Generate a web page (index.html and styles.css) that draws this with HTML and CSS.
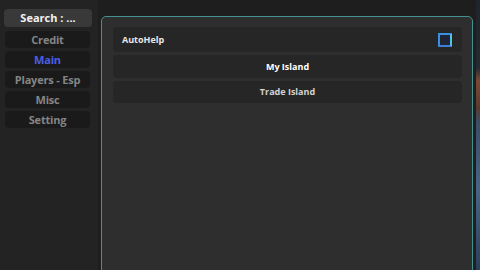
FILE: index.html
```html
<!DOCTYPE html>
<html lang="en">
<head>
    <meta charset="UTF-8" />
    <title>Hub</title>
    <link rel="stylesheet" href="styles.css">
</head>
<body>
    <div class="screen">
        <!-- Seitenleiste -->
        <div class="sidebar">
            <div class="search">Search : ...</div>
            <div class="tab">Credit</div>
            <div class="tab active">Main</div>
            <div class="tab">Players - Esp</div>
            <div class="tab">Misc</div>
            <div class="tab">Setting</div>
        </div>

        <div class="content">
            <div class="panel">
                <div class="row toggle">
                    <span>AutoHelp</span>
                    <span class="check"></span>
                </div>
                <div class="row button bright">My Island</div>
                <div class="row button">Trade Island</div>
            </div>
        </div>

        <div class="game"></div>
    </div>
</body>
</html>
```

FILE: styles.css
```css
body {
    margin: 0;
    background-color: #1e1e1e;
    font-family: "Open Sans", "DejaVu Sans", sans-serif;
    font-weight: bold;
    overflow: hidden;
}

.screen {
    display: flex;
    width: 480px;
    height: 270px;
}

.sidebar {
    width: 98px;
    background-color: #232323;
    padding-top: 9px;
    box-sizing: border-box;
}

.search {
    margin: 0 6px 4px 4px;
    height: 18px;
    line-height: 18px;
    background-color: #393939;
    border-radius: 4px;
    color: #f2f2f2;
    font-size: 11px;
    text-align: center;
}

.tab {
    margin: 0 8px 3px 5px;
    height: 17px;
    line-height: 17px;
    background-color: #1a1a1a;
    border-radius: 4px;
    color: #858585;
    font-size: 11px;
    letter-spacing: -0.2px;
    text-align: center;
}

.tab.active {
    color: #4b5ee6;
}

.content {
    width: 378px;
    padding-top: 16px;
    padding-left: 3px;
    box-sizing: border-box;
}

.panel {
    width: 372px;
    height: 260px;
    box-sizing: border-box;
    background-color: #2e2e2e;
    border: 1px solid #43928f;
    border-radius: 5px;
    padding: 10px 10px 0 11px;
}

.row {
    background-color: #262626;
    border-radius: 4px;
    color: #e6e6e6;
    font-size: 9px;
    margin-bottom: 3px;
}

.toggle {
    display: flex;
    justify-content: space-between;
    align-items: center;
    height: 25px;
    padding: 0 10px 0 9px;
}

.check {
    width: 10px;
    height: 10px;
    border: 2px solid #3a8fe0;
    border-right-color: #4fc4e8;
    border-bottom-color: #3f7fdc;
    border-radius: 1px;
    background-color: #1f2535;
}

.button {
    height: 22px;
    line-height: 22px;
    text-align: center;
    color: #d2d2d2;
}

.button.bright {
    height: 23px;
    line-height: 23px;
    color: #ffffff;
}

.game {
    width: 4px;
    background: linear-gradient(#20252c 0%, #252a33 25%, #7a4a34 30%, #5a3a30 40%, #3c4c66 45%, #4a6486 70%, #2c3e5a 100%);
}
```
